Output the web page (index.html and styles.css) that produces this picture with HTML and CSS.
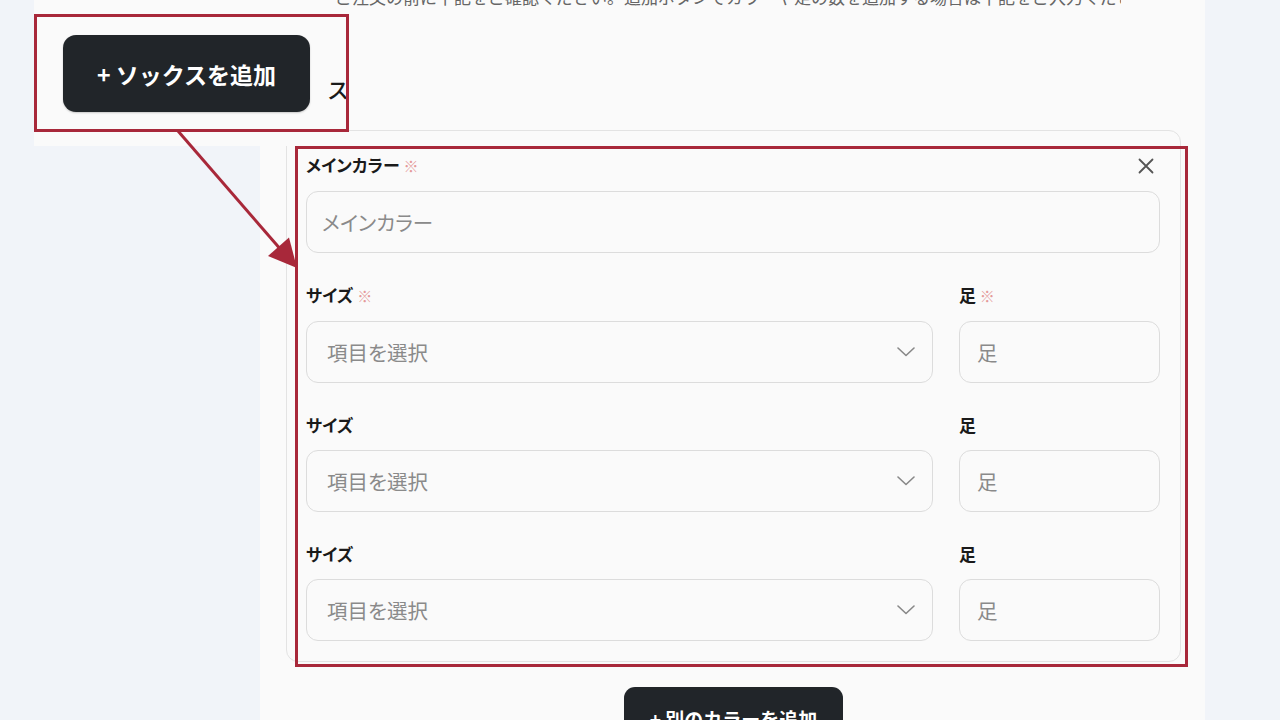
FILE: index.html
```html
<!DOCTYPE html>
<html lang="ja">
<head>
<meta charset="utf-8">
<title>ソックスを追加</title>
<link rel="stylesheet" href="styles.css">
</head>
<body>
<div class="page">
  <div class="gutter"></div>
  <main class="panel">
    <p class="note">ご注文の前に下記をご確認ください。追加ボタンでカラーや足の数を追加する場合は下記をご入力ください。</p>
    <section class="card">
      <div class="group">
        <div class="head">
          <label class="label">メインカラー <span class="req">※</span></label>
          <button class="close" aria-label="閉じる">
            <svg width="16" height="16" viewBox="0 0 16 16"><path d="M1.5 1.5 L14.5 14.5 M14.5 1.5 L1.5 14.5" stroke="#555" stroke-width="1.8" stroke-linecap="round" fill="none"/></svg>
          </button>
        </div>
        <div class="field input">メインカラー</div>
      </div>
      <div class="row">
        <div class="group">
          <label class="label">サイズ <span class="req">※</span></label>
          <div class="field select"><span>項目を選択</span>
            <svg class="chev" width="18" height="10" viewBox="0 0 18 10"><path d="M1 1 L9 8.5 L17 1" stroke="#888" stroke-width="1.6" fill="none" stroke-linecap="round" stroke-linejoin="round"/></svg>
          </div>
        </div>
        <div class="group">
          <label class="label">足 <span class="req">※</span></label>
          <div class="field input foot">足</div>
        </div>
      </div>
      <div class="row">
        <div class="group">
          <label class="label">サイズ</label>
          <div class="field select"><span>項目を選択</span>
            <svg class="chev" width="18" height="10" viewBox="0 0 18 10"><path d="M1 1 L9 8.5 L17 1" stroke="#888" stroke-width="1.6" fill="none" stroke-linecap="round" stroke-linejoin="round"/></svg>
          </div>
        </div>
        <div class="group">
          <label class="label">足</label>
          <div class="field input foot">足</div>
        </div>
      </div>
      <div class="row">
        <div class="group">
          <label class="label">サイズ</label>
          <div class="field select"><span>項目を選択</span>
            <svg class="chev" width="18" height="10" viewBox="0 0 18 10"><path d="M1 1 L9 8.5 L17 1" stroke="#888" stroke-width="1.6" fill="none" stroke-linecap="round" stroke-linejoin="round"/></svg>
          </div>
        </div>
        <div class="group">
          <label class="label">足</label>
          <div class="field input foot">足</div>
        </div>
      </div>
    </section>
    <div class="actions">
      <button class="btn-add">+ 別のカラーを追加</button>
    </div>
  </main>
  <div class="gutter-right"></div>
</div>

<div class="zoom-inset">
  <span class="frag">ス</span>
  <button class="btn-socks">+ ソックスを追加</button>
</div>
<div class="mark mark-top"></div>
<div class="mark mark-card"></div>
<svg class="arrow" width="320" height="290" viewBox="0 0 320 290">
  <line x1="178" y1="131" x2="282" y2="251" stroke="#a8283a" stroke-width="3"/>
  <polygon points="297,268 289,237.5 268,256" fill="#a8283a"/>
</svg>
</body>
</html>
```

FILE: styles.css
```css
* { box-sizing: border-box; }
html, body { margin: 0; padding: 0; }
body {
  background: #f1f4f9;
  font-family: "Noto Sans CJK JP", "Noto Sans", sans-serif;
  color: #1c1c1c;
  overflow: hidden;
  height: 720px;
}
.page { display: flex; min-height: 720px; }
.gutter { width: 260px; flex: none; }
.gutter-right { flex: 1; }
.panel {
  width: 945px;
  flex: none;
  background: #fafafa;
  padding: 0 24px 0 26px;
}
.note {
  position: relative;
  z-index: 1;
  margin: -15px 0 0 49px;
  font-size: 17px;
  line-height: 24px;
  color: #666;
  white-space: nowrap;
  overflow: hidden;
  width: 786px;
}
.card {
  margin-top: 121px;
  border: 1px solid #e3e3e3;
  border-radius: 12px;
  background: #fafafa;
  padding: 22px 20px 20px 19px;
}
.head { display: flex; justify-content: space-between; align-items: center; }
.label {
  display: block;
  font-size: 17px;
  font-weight: 700;
  line-height: 24px;
  margin-bottom: 13px;
  color: #1a1a1a;
  font-feature-settings: "palt";
}
.req { color: #e59a9a; font-weight: 400; font-size: 15px; }
.close {
  border: 0; background: none; padding: 0; margin: 0 6px 12px 0;
  width: 16px; height: 16px; display: flex;
}
.field {
  height: 62px;
  border: 1.5px solid #dcdcdc;
  border-radius: 12px;
  background: #fafafa;
  display: flex;
  align-items: center;
  font-size: 20.5px;
  color: #8a8a8a;
  font-feature-settings: "palt";
}
.input { padding-left: 15px; }
.foot { padding-left: 17px; }
.select { padding: 0 17px 0 20px; justify-content: space-between; }
.row {
  display: grid;
  grid-template-columns: 1fr 201px;
  column-gap: 26px;
  margin-top: 30px;
}
.actions { display: flex; justify-content: center; margin-top: 25px; }
.btn-add {
  height: 62px;
  padding: 0 26px;
  border: 0;
  border-radius: 11px;
  background: #212529;
  color: #fff;
  font-family: inherit;
  font-size: 19px;
  font-weight: 700;
}
.zoom-inset {
  position: absolute;
  left: 34px; top: 0;
  width: 315px; height: 146px;
  background: #fafafa;
  overflow: hidden;
}
.frag {
  position: absolute;
  left: 293px; top: 72px;
  font-size: 22px;
  font-weight: 500;
  color: #1a1a1a;
}
.btn-socks {
  position: absolute;
  left: 29px; top: 35px;
  width: 247px; height: 77px;
  border: 0;
  border-radius: 13px;
  background: #212529;
  color: #fff;
  font-family: inherit;
  font-size: 23px;
  font-weight: 700;
  box-shadow: 0 1px 2px rgba(0,0,0,0.2);
}
.mark {
  position: absolute;
  z-index: 2;
  border: 3px solid #a8283a;
}
.mark-top { left: 34px; top: 14px; width: 315px; height: 118px; }
.mark-card { left: 295px; top: 146px; width: 893px; height: 521px; }
.arrow { position: absolute; left: 0; top: 0; z-index: 2; }
```
